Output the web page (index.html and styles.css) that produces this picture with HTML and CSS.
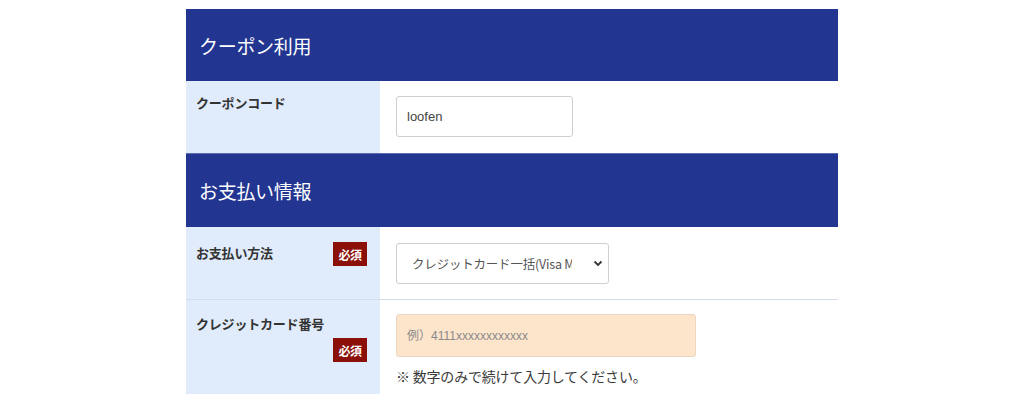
FILE: index.html
```html
<!DOCTYPE html>
<html lang="ja">
<head>
<meta charset="utf-8">
<title>お支払い情報</title>
<link rel="stylesheet" href="styles.css">
</head>
<body>
<div class="form">
  <div class="section-head first">クーポン利用</div>
  <div class="row row-coupon">
    <div class="label"><span class="label-text">クーポンコード</span></div>
    <div class="field">
      <input class="text-input coupon" type="text" value="loofen">
    </div>
  </div>
  <div class="section-head second">お支払い情報</div>
  <div class="row row-method">
    <div class="label label-inline">
      <span class="label-text">お支払い方法</span>
      <span class="badge">必須</span>
    </div>
    <div class="field">
      <span class="select-wrap">
        <select class="select">
          <option>クレジットカード一括(Visa Master JCB AMEX Diners)</option>
        </select>
        <svg class="chev" width="10" height="7" viewBox="0 0 10 7"><path d="M1.5 1.5 L5 5 L8.5 1.5" fill="none" stroke="#333" stroke-width="1.8"/></svg>
      </span>
    </div>
  </div>
  <div class="row row-card">
    <div class="label label-stack">
      <span class="label-text">クレジットカード番号</span>
      <span class="badge">必須</span>
    </div>
    <div class="field">
      <input class="text-input card" type="text" placeholder="例）4111xxxxxxxxxxxx">
      <p class="note">※ 数字のみで続けて入力してください。</p>
    </div>
  </div>
</div>
</body>
</html>
```

FILE: styles.css
```css
html, body {
  margin: 0;
  padding: 0;
  background: #ffffff;
}
body {
  font-family: "Liberation Sans", "Noto Sans CJK JP", sans-serif;
  color: #333333;
}
.form {
  width: 652px;
  margin: 9px 0 0 186px;
}
.section-head {
  background: #223591;
  color: #ffffff;
  font-size: 19px;
  padding-left: 13px;
  display: flex;
  align-items: center;
  font-family: "Noto Sans CJK JP", sans-serif;
  letter-spacing: -0.3px;
}
.section-head.first {
  height: 72px;
}
.section-head.second {
  height: 74px;
  border-top: 1px solid #5d6db0;
  box-sizing: border-box;
}
.row {
  display: grid;
  grid-template-columns: 194px 1fr;
}
.row-coupon { height: 72px; }
.row-method { height: 72px; border-bottom: 1px solid #d3dde9; }
.row-card { height: 94px; }
.label {
  background: #e0ebfb;
  padding: 12px 13px 0 10px;
  box-sizing: border-box;
}
.label-text {
  font-family: "Noto Sans CJK JP", sans-serif;
  font-weight: 700;
  font-size: 13px;
  line-height: 19px;
  color: #333333;
  letter-spacing: -0.2px;
}
.label-inline {
  display: flex;
  justify-content: space-between;
  align-items: flex-start;
  padding-top: 15px;
}
.label-inline .label-text { margin-top: 1px; }
.label-stack {
  display: flex;
  flex-direction: column;
  align-items: flex-start;
  padding-top: 14px;
}
.label-stack .badge {
  align-self: flex-end;
  margin-top: 5px;
}
.badge {
  display: inline-flex;
  align-items: center;
  justify-content: center;
  width: 34px;
  height: 24px;
  background: #8a1008;
  color: #ffffff;
  font-family: "Noto Sans CJK JP", serif;
  font-weight: 700;
  font-size: 12px;
  letter-spacing: -0.5px;
  flex: none;
}
.field {
  padding: 15px 0 0 16px;
  box-sizing: border-box;
}
.text-input {
  display: block;
  box-sizing: border-box;
  border: 1px solid #cfcfcf;
  border-radius: 3px;
  margin: 0;
  padding: 0 10px;
  font-family: "Liberation Sans", "Noto Sans CJK JP", sans-serif;
  color: #444444;
  outline: none;
}
.coupon {
  width: 177px;
  height: 41px;
  font-size: 13px;
  background: #ffffff;
}
.row-method .field { padding-top: 16px; }
.select-wrap {
  position: relative;
  display: inline-block;
}
.select {
  appearance: none;
  -webkit-appearance: none;
  display: block;
  width: 213px;
  height: 41px;
  box-sizing: border-box;
  border: 1px solid #cfcfcf;
  border-radius: 3px;
  background: #ffffff;
  padding: 0 36px 0 15px;
  font-family: "Noto Sans CJK JP", "Liberation Sans", sans-serif;
  font-size: 12.5px;
  color: #555555;
  outline: none;
  letter-spacing: -0.2px;
}
.chev {
  position: absolute;
  right: 6px;
  top: 17px;
  pointer-events: none;
}
.row-card .field { padding-top: 14px; }
.card {
  width: 300px;
  height: 43px;
  font-size: 12px;
  background: #fde5cc;
  border-color: #ead7c2;
}
.card::placeholder {
  color: #8a8a8a;
}
.note {
  margin: 9px 0 0 0;
  font-family: "Noto Sans CJK JP", sans-serif;
  font-size: 14px;
  line-height: 20px;
  color: #3a3a3a;
  letter-spacing: -0.2px;
}
```
